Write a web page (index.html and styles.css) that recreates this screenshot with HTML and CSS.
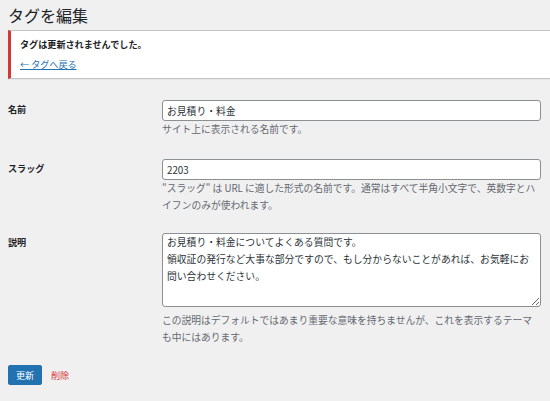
FILE: index.html
```html
<!DOCTYPE html>
<html lang="ja">
<head>
<meta charset="utf-8">
<title>タグを編集</title>
<link rel="stylesheet" href="styles.css">
</head>
<body>
<div class="wrap">
  <h1 class="title">タグを編集</h1>
  <div class="notice">
    <p class="notice-msg">タグは更新されませんでした。</p>
    <p class="notice-link"><a href="#" class="back">← タグへ戻る</a></p>
  </div>
  <form class="form">
    <div class="row row-name">
      <label class="label">名前</label>
      <div class="field">
        <input class="input" type="text" value="お見積り・料金">
        <p class="desc">サイト上に表示される名前です。</p>
      </div>
    </div>
    <div class="row row-slug">
      <label class="label">スラッグ</label>
      <div class="field">
        <input class="input" type="text" value="2203">
        <p class="desc">"スラッグ" は URL に適した形式の名前です。通常はすべて半角小文字で、英数字とハイフンのみが使われます。</p>
      </div>
    </div>
    <div class="row">
      <label class="label">説明</label>
      <div class="field">
        <textarea class="textarea">お見積り・料金についてよくある質問です。
領収証の発行など大事な部分ですので、もし分からないことがあれば、お気軽にお問い合わせください。</textarea>
        <p class="desc desc-area">この説明はデフォルトではあまり重要な意味を持ちませんが、これを表示するテーマも中にはあります。</p>
      </div>
    </div>
    <div class="actions">
      <button type="button" class="btn">更新</button>
      <a href="#" class="delete">削除</a>
    </div>
  </form>
</div>
</body>
</html>
```

FILE: styles.css
```css
html, body {
  margin: 0;
  padding: 0;
  background: #f0f0f1;
  overflow: hidden;
}
body {
  font-family: "Noto Sans CJK JP", "Noto Sans", sans-serif;
  font-size: 9.1px;
  color: #1d2327;
}
.wrap {
  padding: 5px 0 0 8px;
}
.title {
  margin: 0;
  font-size: 16px;
  font-weight: 400;
  line-height: 20px;
  color: #1d2327;
}
.notice {
  margin: 5px -3px 0 0;
  background: #fff;
  border: 1px solid #c3c4c7;
  border-left: 3px solid #d63638;
  padding: 6px 9px 7px;
  box-shadow: 0 1px 1px rgba(0,0,0,0.04);
}
.notice p {
  margin: 0;
  line-height: 14px;
}
.notice-msg {
  font-weight: 700;
}
.notice-link {
  margin-top: 6px !important;
}
.back {
  color: #2271b1;
  text-decoration: underline;
}
.form {
  padding: 21px 9px 0 0;
}
.row {
  display: grid;
  grid-template-columns: 154px 1fr;
  margin-bottom: 19px;
}
.row-name {
  margin-bottom: 21px;
}
.label {
  font-weight: 700;
  line-height: 14px;
  padding-top: 2px;
}
.field {
  display: flex;
  flex-direction: column;
}
.input, .textarea {
  box-sizing: border-box;
  width: 100%;
  border: 1px solid #8c8f94;
  border-radius: 3px;
  background: #fff;
  color: #2c3338;
  font-family: "Noto Sans CJK JP", "Noto Sans", sans-serif;
  font-size: 9.8px;
  margin: 0;
}
.input {
  height: 21px;
  padding: 0 4px;
}
.textarea {
  height: 74px;
  padding: 0 4px;
  line-height: 17px;
  resize: vertical;
  display: block;
}
.desc {
  margin: 0;
  color: #646970;
  font-size: 9.75px;
  line-height: 17px;
}
.desc-area {
  margin-top: 5px;
}
.actions {
  display: flex;
  align-items: center;
  gap: 9px;
}
.btn {
  width: 34px;
  height: 20px;
  padding: 0;
  border: 1px solid #2271b1;
  border-radius: 2px;
  background: #2271b1;
  color: #fff;
  font-family: "Noto Sans CJK JP", "Noto Sans", sans-serif;
  font-size: 9.1px;
  line-height: 18px;
}
.delete {
  color: #d63638;
  text-decoration: none;
  line-height: 14px;
}
```
